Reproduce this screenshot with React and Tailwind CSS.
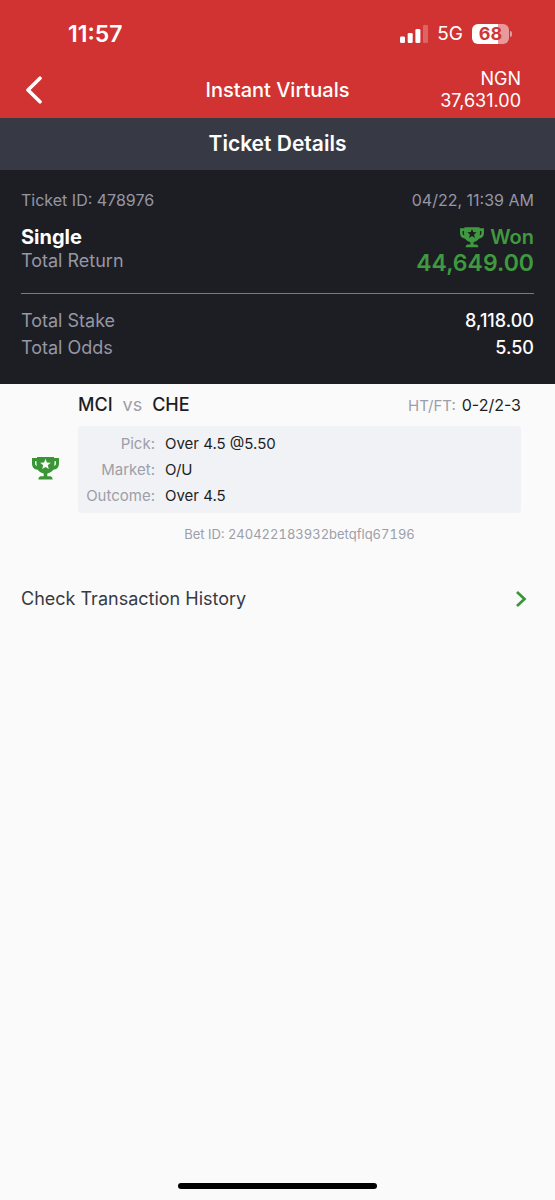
import React from "react";

function Trophy({ className }) {
  return (
    <svg viewBox="0 0 27 23" className={className} aria-hidden="true">
      <path
        fill="currentColor"
        fillRule="evenodd"
        d="M5 0H22V1H27V6.500C27 10.300 24.800 12.400 21.300 12.800C19.600 15 17.500 16.200 15.300 16.600V19.300H18.500Q20.500 19.500 20.700 22.500H6.300Q6.500 19.500 8.500 19.300H11.700V16.600C9.500 16.200 7.400 15 5.700 12.800C2.200 12.400 0 10.300 0 6.500V1H5ZM3 4.300V6.300C3 7.800 3.600 8.700 4.800 9C4.500 7.500 4.500 6 4.500 4.300ZM24 4.300H22.500C22.500 6 22.500 7.500 22.200 9C23.400 8.700 24 7.800 24 6.300ZM13.500 1.800L12.100 5.400L8.200 5.700L11.200 8.200L10.200 12L13.500 9.900L16.800 12L15.800 8.200L18.800 5.700L14.900 5.400Z"
      />
    </svg>
  );
}

function StatusBar() {
  return (
    <div className="flex h-[67px] items-center justify-between pl-[68px] pr-[43px]">
      <time className="text-[23px] leading-7 font-semibold">11:57</time>
      <div className="flex items-center gap-[9px]">
        <svg viewBox="0 0 28 18" className="h-[18px] w-7" fill="#fff" aria-hidden="true">
          <rect x="0" y="11.500" width="5" height="6.500" rx="1.300" />
          <rect x="7.700" y="8" width="5" height="10" rx="1.300" />
          <rect x="15.400" y="4" width="5" height="14" rx="1.300" />
          <rect x="23" y="0" width="5" height="18" rx="1.300" opacity=".25" />
        </svg>
        <span className="text-[19px] leading-6">5G</span>
        <div className="flex items-center gap-px">
          <span className="flex h-5 w-[37px] items-center justify-center rounded-md bg-linear-to-r from-white from-69% to-[#e89a9b] to-69% text-[18px] leading-5 font-bold text-[#d23535]">
            68
          </span>
          <span className="h-[6px] w-[2px] rounded-r-full bg-[#e89a9b]" />
        </div>
      </div>
    </div>
  );
}

const picks = [
  ["Pick:", "Over 4.5 @5.50"],
  ["Market:", "O/U"],
  ["Outcome:", "Over 4.5"],
];

export default function App() {
  return (
    <div className="flex min-h-screen flex-col bg-[#fafafb] font-['Inter',sans-serif] text-[#1d1e24]">
      <header className="bg-[#d13333] text-white">
        <StatusBar />
        <div className="grid h-[51px] grid-cols-[1fr_auto_1fr] items-center pb-[6px]">
          <button type="button" aria-label="Back" className="ml-[25px] w-fit">
            <svg viewBox="0 0 18 28" className="h-7 w-[18px]" fill="none" stroke="currentColor" strokeWidth="3.600" strokeLinecap="round" strokeLinejoin="round" aria-hidden="true">
              <path d="M15 2.200L3 14L15 25.800" />
            </svg>
          </button>
          <h1 className="text-xl leading-6 font-medium">Instant Virtuals</h1>
          <div className="pr-[34px] text-right text-lg leading-[22px]">
            <p>NGN</p>
            <p>37,631.00</p>
          </div>
        </div>
      </header>

      <h2 className="flex h-[52px] items-center justify-center bg-[#373a45] text-[21px] font-semibold text-white">
        Ticket Details
      </h2>

      <section className="bg-[#1d1e24] px-[21px] pt-[18px] pb-[23px] text-[#9597a3]">
        <div className="flex justify-between text-base leading-6">
          <span>Ticket ID: 478976</span>
          <time>04/22, 11:39 AM</time>
        </div>
        <div className="flex justify-between pt-3 pb-[17px]">
          <div>
            <h3 className="text-xl leading-[26px] font-bold text-white">Single</h3>
            <p className="text-lg leading-[22px]">Total Return</p>
          </div>
          <div className="text-right text-[#3f9a3f]">
            <p className="flex items-center justify-end gap-[6px] text-xl leading-[26px] font-semibold">
              <Trophy className="h-[21px] w-6" />
              Won
            </p>
            <p className="text-[23px] leading-[26px] font-semibold">44,649.00</p>
          </div>
        </div>
        <dl className="grid grid-cols-2 border-t border-[#777983] pt-[13px] text-lg leading-[27px]">
          <dt>Total Stake</dt>
          <dd className="text-right font-medium text-white">8,118.00</dd>
          <dt>Total Odds</dt>
          <dd className="text-right font-medium text-white">5.50</dd>
        </dl>
      </section>

      <main className="flex-1">
        <section className="flex pr-[34px]">
          <div className="w-[78px] shrink-0 pt-[73px] pl-8">
            <Trophy className="h-[23px] w-[27px] text-[#3a9635]" />
          </div>
          <div className="flex-1">
            <div className="flex h-[42px] items-center justify-between">
              <h3 className="flex gap-[10px] text-lg leading-6 font-medium">
                <span>MCI</span>
                <span className="font-normal text-[#9c9ea8]">vs</span>
                <span>CHE</span>
              </h3>
              <p className="flex items-baseline gap-[6px] text-base leading-6">
                <span className="text-[15px] text-[#9c9ea8]">HT/FT:</span>
                <span>0-2/2-3</span>
              </p>
            </div>
            <dl className="grid grid-cols-[77px_1fr] gap-x-[10px] rounded-sm bg-[#f1f2f5] pt-[5px] pb-1 text-[15px] leading-[26px]">
              {picks.map(([label, value]) => (
                <React.Fragment key={label}>
                  <dt className="text-right text-[#9c9ea8]">{label}</dt>
                  <dd>{value}</dd>
                </React.Fragment>
              ))}
            </dl>
            <p className="pt-[11px] text-center text-[13px] leading-5 text-[#9c9ea8] tabular-nums">
              Bet ID: 240422183932betqflq67196
            </p>
          </div>
        </section>

        <a href="#history" className="mt-[41px] flex items-center justify-between pr-7 pl-[21px] text-lg leading-7 text-[#383a43]">
          Check Transaction History
          <svg viewBox="0 0 12 16" className="h-4 w-3" fill="none" stroke="#3a9635" strokeWidth="2.700" aria-hidden="true">
            <path d="M2 1L9.500 8L2 15" />
          </svg>
        </a>
      </main>

      <footer className="flex justify-center pb-[11px]">
        <div className="h-[6px] w-[36%] rounded-full bg-black" />
      </footer>
    </div>
  );
}
